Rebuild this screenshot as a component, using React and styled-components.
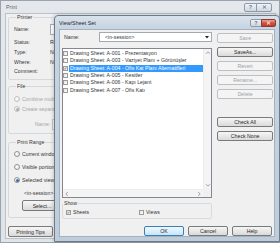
import React from 'react';
import styled, { createGlobalStyle, css } from 'styled-components';

const Global = createGlobalStyle`
  html, body { margin: 0; padding: 0; background: #e9edf1; }
  body {
    width: 280px; height: 243px; overflow: hidden;
    font-family: "Liberation Sans", Arial, sans-serif;
    font-size: 5.2px; color: #363636;
  }
  * { box-sizing: border-box; }
`;

/* ---------- generic bits ---------- */
const Btn = styled.div`
  height: ${p => p.$h || 10}px;
  width: ${p => (p.$w ? `${p.$w}px` : 'auto')};
  display: flex; align-items: center; justify-content: center;
  border: 1px solid #7a7a7a; border-radius: 2px;
  background: linear-gradient(#f6f6f6, #e8e8e8 50%, #dadada);
  color: #2a2a2a; font-size: 5.2px; white-space: nowrap;
  ${p => p.$disabled && css`
    border-color: #bcc0c4; background: #f4f4f4; color: #a0a0a0;
  `}
  ${p => p.$default && css`
    border-color: #3c7fb1;
    background: linear-gradient(#eef7fd, #dcf0fc 50%, #c4e5f8);
  `}
`;

const Box = styled.span`
  width: 5px; height: 5px; flex: none;
  border: 1px solid #9a9b9b;
  background: linear-gradient(135deg, #e2e2e2, #fdfdfd);
  display: inline-flex; align-items: center; justify-content: center;
`;

const Check = ({ on }) => (
  <Box>
    {on && (
      <svg width="5" height="5" viewBox="0 0 5 5">
        <path d="M0.6 2.6 L1.9 4 L4.4 0.8" fill="none" stroke="#2a3a4a" strokeWidth="0.9" />
      </svg>
    )}
  </Box>
);

const RadioCircle = styled.span`
  width: 6px; height: 6px; flex: none; border-radius: 50%;
  border: 1px solid ${p => (p.$disabled ? '#c2c2c2' : '#929292')};
  background: radial-gradient(circle at 40% 40%, #ffffff, #e0e0e0);
  display: inline-flex; align-items: center; justify-content: center;
  &::after {
    content: '';
    width: 3px; height: 3px; border-radius: 50%;
    display: ${p => (p.$on ? 'block' : 'none')};
    background: ${p => (p.$disabled ? '#acacac' : '#2f6fb5')};
  }
`;

const Chevron = ({ dir }) => {
  const d = {
    up: 'M1 3.8 L3 1.8 L5 3.8',
    down: 'M1 2.2 L3 4.2 L5 2.2',
    left: 'M3.8 1 L1.8 3 L3.8 5',
    right: 'M2.2 1 L4.2 3 L2.2 5',
  }[dir];
  return (
    <svg width="6" height="6" viewBox="0 0 6 6">
      <path d={d} fill="none" stroke="#8c8c8c" strokeWidth="0.8" />
    </svg>
  );
};

/* ---------- Print window (behind) ---------- */
const PrintWindow = styled.div`
  position: relative;
  width: 280px; height: 243px;
  border: 1px solid #9aa4ae;
  background: linear-gradient(#e4e8ec, #dfe4e9);
  display: flex; flex-direction: column;
`;

const TitleBar = styled.div`
  height: ${p => p.$h}px; flex: none;
  display: flex; align-items: center; justify-content: space-between;
  padding: 0 ${p => p.$pr}px 0 ${p => p.$pl}px;
`;

const TitleText = styled.span`
  font-size: 5.4px; color: ${p => p.$color};
`;

const CaptionGroup = styled.div`
  display: flex;
`;

const CaptionBtn = styled.div`
  width: ${p => p.$w}px; height: ${p => p.$h}px;
  display: flex; align-items: center; justify-content: center;
  border: 1px solid ${p => (p.$close ? '#8b3a32' : '#8e9aa8')};
  margin-left: -1px;
  border-radius: ${p => (p.$first ? '2px 0 0 2px' : p.$last ? '0 2px 2px 0' : '0')};
  background: ${p => (p.$close
    ? 'linear-gradient(#e8a595, #d2543e 50%, #c23a22)'
    : 'linear-gradient(#f1f4f7, #dde4ec 50%, #cfd8e2)')};
  color: ${p => (p.$close ? '#fff' : '#6b7785')};
  font-size: 5.4px; font-weight: bold;
`;

const XGlyph = ({ color }) => (
  <svg width="5" height="4" viewBox="0 0 5 4">
    <path d="M0.8 0.4 L4.2 3.6 M4.2 0.4 L0.8 3.6" stroke={color} strokeWidth="0.9" />
  </svg>
);

const PrintBody = styled.div`
  flex: 1;
  margin: 0 3px 3px 4px;
  border: 1px solid #b9c2cb;
  background: #f0f0f0;
  padding: 0 2px;
  display: flex; flex-direction: column;
`;

const Group = styled.fieldset`
  margin: ${p => p.$mt || 0}px 0 0 0;
  padding: 0 0 ${p => p.$pb || 0}px 5px;
  width: ${p => p.$w}px;
  border: 1px solid #d3d9df; border-radius: 2px;
  display: flex; flex-direction: column;
`;

const Legend = styled.legend`
  padding: 0 1px; margin-left: ${p => p.$ml || 2}px;
  height: 6px; line-height: 6px; font-size: 5.2px; color: #363636;
`;

const FieldRow = styled.div`
  height: ${p => p.$h}px; margin-top: ${p => p.$mt || 0}px;
  padding-left: ${p => p.$pl || 0}px;
  display: flex; align-items: center; gap: 2px;
  color: ${p => (p.$muted ? '#a6a6a6' : '#363636')};
`;

const FieldLabel = styled.span`
  width: ${p => p.$w}px; flex: none;
`;

const Input = styled.div`
  width: 150px; height: ${p => p.$h}px;
  border: 1px solid ${p => (p.$muted ? '#c7c7c7' : '#a5acb5')};
  background: ${p => (p.$muted ? '#f4f4f4' : '#fff')};
`;

const Radio = ({ on, disabled, children, mt }) => (
  <FieldRow $h={10} $mt={mt} $muted={disabled}>
    <RadioCircle $on={on} $disabled={disabled} />
    <span>{children}</span>
  </FieldRow>
);

/* ---------- View/Sheet Set dialog ---------- */
const Dialog = styled.div`
  position: absolute; left: 53px; top: 14px;
  width: 226px; height: 227px;
  border: 1px solid #6c7b8b; border-radius: 4px 4px 0 0;
  background: linear-gradient(#d9e3ed, #c7d4e1 12px, #bfcddb);
  display: flex; flex-direction: column;
  box-shadow: 0 0 4px rgba(0,0,0,0.25);
`;

const DialogContent = styled.div`
  flex: 1;
  margin: 0 4px 4px 4px;
  border: 1px solid #a4b1bf;
  background: #f0f0f0;
  padding: 2px 1px 0 2px;
  display: flex; flex-direction: column;
`;

const Main = styled.div`
  display: flex; gap: 5px;
`;

const LeftCol = styled.div`
  width: 151px; display: flex; flex-direction: column;
`;

const RightCol = styled.div`
  width: 56px; padding-top: 1px;
  display: flex; flex-direction: column; gap: 4px;
`;

const NameRow = styled.div`
  height: 10px; display: flex; align-items: center;
`;

const NameLabel = styled.span`
  width: 37px; padding-left: 2px;
`;

const Select = styled.div`
  flex: 1; height: 10px;
  border: 1px solid #a3a9b0; background: #fff;
  display: flex; align-items: center; justify-content: space-between;
  padding: 0 2px 0 5px;
`;

const List = styled.div`
  margin-top: 6px; height: 150px;
  border: 1px solid #828790; background: #fff;
  display: grid; grid-template-columns: 1fr 8px; grid-template-rows: 1fr 8px;
`;

const Rows = styled.div`
  padding-top: 1px; overflow: hidden;
`;

const ListRow = styled.div`
  height: 7.3px; display: flex; align-items: center; gap: 1px;
  white-space: nowrap;
`;

const RowText = styled.span`
  flex: 1; height: 7px; line-height: 7px; padding-left: 1px;
  background: ${p => (p.$sel ? '#3399ff' : 'transparent')};
  color: ${p => (p.$sel ? '#fff' : '#363636')};
`;

const VScroll = styled.div`
  background: #f4f4f4; border-left: 1px solid #ececec;
  display: flex; flex-direction: column; justify-content: space-between; align-items: center;
  padding: 1px 0;
`;

const HScroll = styled.div`
  background: #f4f4f4; border-top: 1px solid #ececec;
  display: flex; justify-content: space-between; align-items: center;
  padding: 0 1px;
`;

const Corner = styled.div`
  background: #f0f0f0;
`;

const ShowGroup = styled.fieldset`
  margin: 2px 0 0 0; padding: 0;
  border: 1px solid #d5dbe1; border-radius: 2px;
`;

const ShowLegend = styled.legend`
  padding: 0 1px; margin-left: 0;
  height: 6px; line-height: 6px;
`;

const ShowRow = styled.div`
  display: flex; align-items: center;
  height: 8px; margin: 2px 0 2px 3px;
`;

const ShowItem = styled.label`
  width: ${p => p.$w}px; display: flex; align-items: center; gap: 2px;
`;

const Spacer = styled.div`
  height: ${p => p.$h}px;
`;

const BottomRow = styled.div`
  margin-top: 7px; padding-right: 1px;
  display: flex; justify-content: flex-end; gap: 4px;
`;

const sheets = [
  { t: 'Drawing Sheet: A-001 - Prezentasyon' },
  { t: 'Drawing Sheet: A-003 - Vaziyet Planı + Görünüşler' },
  { t: 'Drawing Sheet: A-004 - Ofis Kat Planı Alternatifleri', on: true },
  { t: 'Drawing Sheet: A-005 - Kesitler' },
  { t: 'Drawing Sheet: A-006 - Kapı Lejant' },
  { t: 'Drawing Sheet: A-007 - Ofis Katı' },
];

export default function App() {
  return (
    <>
      <Global />
      <PrintWindow>
        <TitleBar $h={12} $pl={5} $pr={7}>
          <TitleText $color="#5d6670">Print</TitleText>
          <CaptionGroup>
            <CaptionBtn $w={13} $h={9} $first>?</CaptionBtn>
            <CaptionBtn $w={16} $h={9} $last><XGlyph color="#6b7785" /></CaptionBtn>
          </CaptionGroup>
        </TitleBar>
        <PrintBody>
          <Group $w={255} $pb={3}>
            <Legend>Printer</Legend>
            <FieldRow $h={12} $mt={3}>
              <FieldLabel $w={34}>Name:</FieldLabel>
              <Input $h={11} />
            </FieldRow>
            <FieldRow $h={10} $mt={2}><FieldLabel $w={34}>Status:</FieldLabel><span>Ready</span></FieldRow>
            <FieldRow $h={10}><FieldLabel $w={34}>Type:</FieldLabel><span>N/A</span></FieldRow>
            <FieldRow $h={9}><FieldLabel $w={34}>Where:</FieldLabel><span>Ne00:</span></FieldRow>
            <FieldRow $h={10}><FieldLabel $w={34}>Comment:</FieldLabel><span></span></FieldRow>
          </Group>
          <Group $w={255} $mt={3} $pb={3}>
            <Legend>File</Legend>
            <Radio disabled mt={5}>Combine multiple selected views/sheets into a single file</Radio>
            <Radio disabled on>Create separate files. View/sheet names will be appended</Radio>
            <FieldRow $h={12} $mt={4} $pl={21} $muted>
              <FieldLabel $w={15}>Name:</FieldLabel>
              <Input $h={11} $muted />
            </FieldRow>
          </Group>
          <Group $w={255} $mt={5} $pb={6}>
            <Legend>Print Range</Legend>
            <Radio mt={4}>Current window</Radio>
            <Radio mt={3}>Visible portion of current window</Radio>
            <Radio mt={3} on>Selected views/sheets</Radio>
            <FieldRow $h={10} $mt={3} $pl={10}>&lt;in-session&gt;</FieldRow>
            <FieldRow $h={11} $mt={2} $pl={8}>
              <Btn $w={40} $h={11}>Select...</Btn>
            </FieldRow>
          </Group>
          <FieldRow $h={11} $mt={8}>
            <Btn $w={45} $h={11}>Printing Tips</Btn>
          </FieldRow>
        </PrintBody>

        <Dialog>
          <TitleBar $h={13} $pl={4} $pr={3}>
            <TitleText $color="#1e2a36">View/Sheet Set</TitleText>
            <CaptionGroup>
              <CaptionBtn $w={12} $h={8} $first>?</CaptionBtn>
              <CaptionBtn $w={15} $h={8} $last $close><XGlyph color="#fff" /></CaptionBtn>
            </CaptionGroup>
          </TitleBar>
          <DialogContent>
            <Main>
              <LeftCol>
                <NameRow>
                  <NameLabel>Name:</NameLabel>
                  <Select>
                    <span>&lt;in-session&gt;</span>
                    <svg width="4" height="3" viewBox="0 0 4 3"><path d="M0 0 L4 0 L2 2.6 Z" fill="#222" /></svg>
                  </Select>
                </NameRow>
                <List>
                  <Rows>
                    {sheets.map(s => (
                      <ListRow key={s.t}>
                        <Check on={s.on} />
                        <RowText $sel={s.on}>{s.t}</RowText>
                      </ListRow>
                    ))}
                  </Rows>
                  <VScroll>
                    <Chevron dir="up" />
                    <Chevron dir="down" />
                  </VScroll>
                  <HScroll>
                    <Chevron dir="left" />
                    <Chevron dir="right" />
                  </HScroll>
                  <Corner />
                </List>
                <ShowGroup>
                  <ShowLegend>Show</ShowLegend>
                  <ShowRow>
                    <ShowItem $w={73}><Check on />Sheets</ShowItem>
                    <ShowItem $w={40}><Check />Views</ShowItem>
                  </ShowRow>
                </ShowGroup>
              </LeftCol>
              <RightCol>
                <Btn $disabled>Save</Btn>
                <Btn>SaveAs...</Btn>
                <Btn $disabled>Revert</Btn>
                <Btn $disabled>Rename...</Btn>
                <Btn $disabled>Delete</Btn>
                <Spacer $h={10} />
                <Btn>Check All</Btn>
                <Btn>Check None</Btn>
              </RightCol>
            </Main>
            <BottomRow>
              <Btn $w={40} $default>OK</Btn>
              <Btn $w={40}>Cancel</Btn>
              <Btn $w={40}>Help</Btn>
            </BottomRow>
          </DialogContent>
        </Dialog>
      </PrintWindow>
    </>
  );
}
